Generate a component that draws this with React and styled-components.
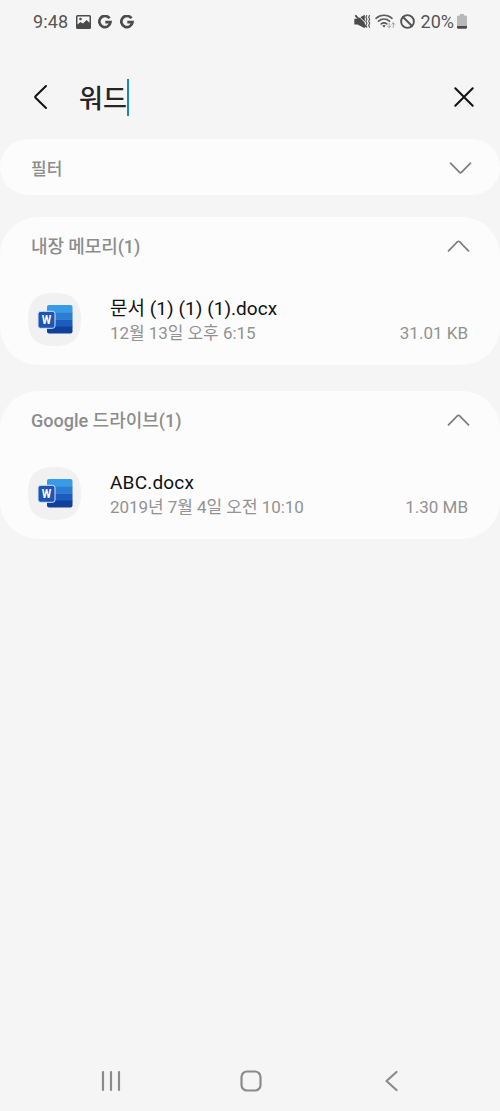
import React from 'react';
import styled, { createGlobalStyle } from 'styled-components';

const GlobalStyle = createGlobalStyle`
    * {
        box-sizing: border-box;
    }
    body {
        margin: 0;
        background-color: #f5f5f5;
        font-family: Roboto, "Noto Sans CJK KR", sans-serif;
    }
`;

const Screen = styled.div`
    display: flex;
    flex-direction: column;
    width: 500px;
    height: 1111px;
    overflow: hidden;
    background-color: #f5f5f5;
`;

const StatusBar = styled.div`
    display: flex;
    justify-content: space-between;
    align-items: center;
    height: 43px;
    padding: 0 33px 0 33px;
    color: #555;
`;

const StatusGroup = styled.div`
    display: flex;
    align-items: center;
    gap: ${props => props.gap};
`;

const StatusText = styled.span`
    font-size: 18px;
    line-height: 20px;
    letter-spacing: ${props => props.spacing || 0};
    margin-left: ${props => props.left || 0};
    margin-right: ${props => props.right || 0};
`;

const Icon = styled.svg`
    display: block;
    flex: none;
    fill: none;
    stroke: ${props => props.color || 'none'};
    stroke-width: ${props => props.weight || 2};
    stroke-linecap: round;
    stroke-linejoin: round;
`;

const IconButton = styled.button`
    display: flex;
    padding: 0;
    border: 0;
    background: none;
`;

const SearchBar = styled.header`
    display: flex;
    align-items: center;
    height: 96px;
    padding: 12px 26px 0 33px;
`;

const SearchField = styled.div`
    display: flex;
    flex: 1;
    align-items: center;
    height: 38px;
    margin-left: 31px;
`;

const Query = styled.span`
    padding-top: 3px;
    font-size: 26px;
    font-weight: 500;
    line-height: 36px;
    letter-spacing: 0.2px;
    color: #252525;
`;

const Caret = styled.span`
    width: 2px;
    height: 37px;
    background-color: #1586c0;
`;

const Card = styled.section`
    height: ${props => props.height};
    margin-bottom: ${props => props.gap};
    border-radius: ${props => props.radius};
    background-color: #fcfcfc;
`;

const CardHeader = styled.div`
    display: flex;
    justify-content: space-between;
    align-items: center;
    height: 58px;
    padding: 0 ${props => props.right || '30px'} 0 31px;
`;

const CardTitle = styled.h2`
    margin: 0;
    padding-top: ${props => props.top || '2px'};
    font-size: ${props => props.size || '18px'};
    font-weight: 500;
    line-height: 24px;
    letter-spacing: ${props => props.spacing || 0};
    color: #8c8c8c;
`;

const FileRow = styled.div`
    display: flex;
    align-items: center;
    height: 89px;
    padding: 0 32px 0 28px;
`;

const FileInfo = styled.div`
    flex: 1;
    margin-left: 29px;
    padding-top: 2px;
`;

const FileName = styled.div`
    font-size: 19px;
    line-height: 25px;
    letter-spacing: ${props => props.spacing || 0};
    color: #111;
`;

const FileMeta = styled.div`
    display: flex;
    justify-content: space-between;
    font-size: 17px;
    line-height: 25px;
    color: #929292;
`;

const MetaText = styled.span`
    letter-spacing: ${props => props.spacing || 0};
`;

const NavBar = styled.nav`
    display: flex;
    justify-content: space-between;
    align-items: center;
    height: 60px;
    margin-top: auto;
    padding: 0 102px 0 100px;
`;

const groups = [
    {
        title: '내장 메모리(1)',
        titleSpacing: '-0.1px',
        gap: '26px',
        name: '문서 (1) (1) (1).docx',
        nameSpacing: '0.04px',
        date: '12월 13일 오후 6:15',
        size: '31.01 KB'
    },
    {
        title: 'Google 드라이브(1)',
        gap: '0',
        name: 'ABC.docx',
        nameSpacing: '0.2px',
        date: '2019년 7월 4일 오전 10:10',
        size: '1.30 MB'
    }
];

const PictureIcon = () => (
    <Icon width="15" height="14" viewBox="0 0 15 14">
        <path fill="#4b4b4b" fillRule="evenodd" d="M1.5 0h12A1.5 1.5 0 0 1 15 1.500v11a1.500 1.500 0 0 1-1.500 1.500h-12A1.500 1.500 0 0 1 0 12.500v-11A1.500 1.500 0 0 1 1.500 0zM1.500 1.500V9.500L4.500 7l2.500 1.500 3.500-3.500 3 2.800V1.500z"/>
        <circle cx="4.500" cy="4" r="1.300" fill="#4b4b4b"/>
    </Icon>
);

const GoogleIcon = () => (
    <Icon width="14" height="14" viewBox="0 0 14 14">
        <path stroke="#4b4b4b" strokeWidth="2.700" strokeLinecap="butt" strokeLinejoin="miter" d="M11.500 3.300A5.600 5.600 0 1 0 12.500 7.200H7.300"/>
    </Icon>
);

const MuteIcon = () => (
    <Icon width="17" height="15" viewBox="0 0 17 15">
        <path fill="#4b4b4b" d="M.3 4.800h3.200L10.800 .8v13.400L3.500 10.400H.3z"/>
        <path stroke="#f5f5f5" strokeWidth="1" d="M3.500 .8l8.500 8.500"/>
        <path stroke="#4b4b4b" strokeWidth="1.800" d="M1.800 1.800l9.500 10.500"/>
        <path stroke="#5a5a5a" strokeWidth="1.200" d="M12.700 1.500l-.8 1.700 1 2-1 2 1 2-1 2 .8 2M15.500 1.500l-.8 1.700 1 2-1 2 1 2-1 2 .8 2"/>
    </Icon>
);

const WifiIcon = () => (
    <Icon width="21" height="15" viewBox="0 0 21 15">
        <path stroke="#5a5a5a" strokeWidth="1.600" d="M1 4.300c4.500-4 11.500-4 16 0M3.500 7.200c3.300-2.800 7.700-2.800 11 0M6.200 9.900c1.700-1.300 3.900-1.300 5.600 0"/>
        <path fill="#4b4b4b" d="M7.300 11.600q1.700-1.200 3.400 0L9 13.500z"/>
        <path stroke="#a5a5a5" strokeWidth="1" d="M14.200 9v4.700m-1.500-1.500l1.500 1.500 1.500-1.500M18.300 13.500V8.800m-1.500 1.500l1.500-1.500 1.500 1.500"/>
    </Icon>
);

const BlockIcon = () => (
    <Icon width="15" height="15" viewBox="0 0 15 15" color="#555" weight="1.900">
        <circle cx="7.500" cy="7.500" r="6.400"/>
        <path d="M3 3l9 9"/>
    </Icon>
);

const BatteryIcon = () => (
    <Icon width="10" height="15" viewBox="0 0 10 15">
        <path fill="#b8b8b8" d="M3 0h4v1.500h1.500A1.500 1.500 0 0 1 10 3v9H0V3a1.500 1.500 0 0 1 1.500-1.500H3z"/>
        <path fill="#4b4b4b" d="M0 12h10v1.500A1.200 1.200 0 0 1 8.800 14.700H1.200A1.200 1.200 0 0 1 0 13.500z"/>
    </Icon>
);

const Chevron = ({ up }) => (
    <Icon width="23" height="14" viewBox="0 0 23 14" color="#7d7d7d" weight="1.700">
        <path d={up ? 'M1.500 11.800L10.600 2.700Q11.500 1.800 12.400 2.700L21.500 11.800' : 'M1.500 2.200L10.600 11.300Q11.500 12.200 12.400 11.300L21.500 2.200'}/>
    </Icon>
);

const WordIcon = () => (
    <Icon width="53" height="53" viewBox="0 0 53 53">
        <defs>
            <clipPath id="page">
                <rect x="19" y="12" width="25.500" height="28.500" rx="2"/>
            </clipPath>
        </defs>
        <path fill="#f1f1f1" d="M26.500 0C45 0 53 8 53 26.500S45 53 26.500 53 0 45 0 26.500 8 0 26.500 0z"/>
        <g clipPath="url(#page)">
            <path fill="#379be5" d="M18 12h27v7.500H18z"/>
            <path fill="#2b7cd3" d="M18 19.200h27v7.500H18z"/>
            <path fill="#1b5cbe" d="M18 26.400h27v7.500H18z"/>
            <path fill="#10409a" d="M18 33.600h27V41H18z"/>
        </g>
        <rect x="10" y="18.300" width="17" height="17" rx="2.500" fill="#1c55b4" stroke="#d3e5f7" strokeWidth="1"/>
        <text x="18.500" y="31" textAnchor="middle" fontSize="12" fontWeight="700" fontFamily="Roboto, sans-serif" textLength="9.500" lengthAdjust="spacingAndGlyphs" fill="#fff">W</text>
    </Icon>
);

const FileGroup = ({ group }) => (
    <Card height="148px" gap={group.gap} radius="38px">
        <CardHeader>
            <CardTitle spacing={group.titleSpacing}>{group.title}</CardTitle>
            <Chevron up/>
        </CardHeader>
        <FileRow>
            <WordIcon/>
            <FileInfo>
                <FileName spacing={group.nameSpacing}>{group.name}</FileName>
                <FileMeta>
                    <MetaText spacing="-0.05px">{group.date}</MetaText>
                    <MetaText>{group.size}</MetaText>
                </FileMeta>
            </FileInfo>
        </FileRow>
    </Card>
);

const App = () => (
    <>
        <GlobalStyle/>
        <Screen>
            <StatusBar>
                <StatusGroup gap="7.500px">
                    <StatusText spacing="0.150px">9:48</StatusText>
                    <PictureIcon/>
                    <GoogleIcon/>
                    <GoogleIcon/>
                </StatusGroup>
                <StatusGroup gap="4px">
                    <MuteIcon/>
                    <WifiIcon/>
                    <BlockIcon/>
                    <StatusText left="2px" right="-1px">20%</StatusText>
                    <BatteryIcon/>
                </StatusGroup>
            </StatusBar>
            <SearchBar>
                <IconButton aria-label="뒤로">
                    <Icon width="15" height="26" viewBox="0 0 15 26" color="#111" weight="2">
                        <path d="M13 2L2.500 12.200Q1.700 13 2.500 13.800L13 24"/>
                    </Icon>
                </IconButton>
                <SearchField>
                    <Query>워드</Query>
                    <Caret/>
                </SearchField>
                <IconButton aria-label="지우기">
                    <Icon width="20" height="20" viewBox="0 0 20 20" color="#111" weight="2">
                        <path d="M1.300 1.300l17.400 17.400M18.700 1.300L1.300 18.700"/>
                    </Icon>
                </IconButton>
            </SearchBar>
            <Card height="56px" gap="22px" radius="28px">
                <CardHeader right="28px">
                    <CardTitle size="17px" top="1px">필터</CardTitle>
                    <Chevron/>
                </CardHeader>
            </Card>
            {groups.map((group) => <FileGroup key={group.title} group={group}/>)}
            <NavBar>
                <Icon width="21" height="22" viewBox="0 0 21 22" color="#8b8b8b" weight="2.200">
                    <path d="M3 2v18M11 2v18M19 2v18"/>
                </Icon>
                <Icon width="29" height="22" viewBox="0 0 29 22" color="#8b8b8b" weight="2.200">
                    <rect x="3.500" y="1.500" width="19" height="19" rx="5.500"/>
                </Icon>
                <Icon width="14" height="22" viewBox="0 0 14 22" color="#8b8b8b" weight="2.200">
                    <path d="M12.500 2L2.500 11l10 9"/>
                </Icon>
            </NavBar>
        </Screen>
    </>
);

export default App;
